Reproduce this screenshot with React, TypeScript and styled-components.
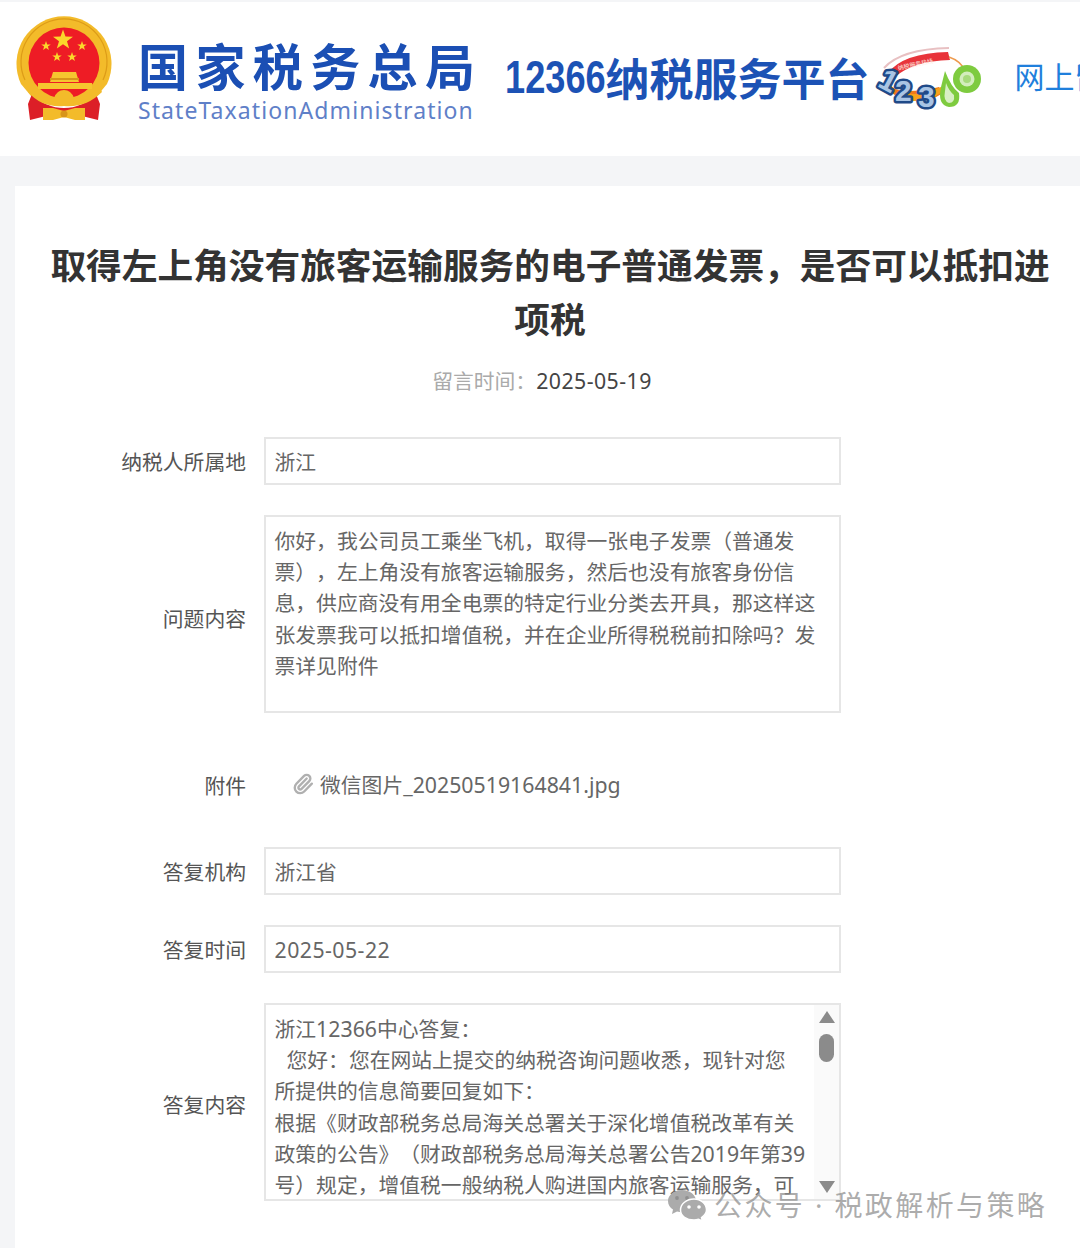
import React from "react";
import styled, { createGlobalStyle } from "styled-components";
import { Paperclip } from "lucide-react";

const Global = createGlobalStyle`
  html, body { margin: 0; padding: 0; background: #f4f5f7; }
  body { font-family: "Noto Sans CJK SC", "Noto Sans", sans-serif; text-spacing-trim: space-all; }
`;

const Page = styled.div`
  position: relative;
  width: 1080px;
  height: 1248px;
  overflow: hidden;
  background: #f4f5f7;
  padding-top: 2px;
  box-sizing: border-box;
`;

const Header = styled.header`
  display: flex;
  align-items: center;
  height: 154px;
  padding-left: 16px;
  background: #fff;
  white-space: nowrap;
`;

const Brand = styled.div`
  display: flex;
  flex-direction: column;
  margin-left: 26px;
  margin-top: 3px;
  flex: none;
`;

const BrandName = styled.div`
  font-size: 50px;
  line-height: 56px;
  font-weight: 700;
  letter-spacing: 7.4px;
  color: #1b4fb4;
`;

const BrandSub = styled.div`
  font-family: "Noto Sans", sans-serif;
  margin-top: 3px;
  font-size: 23px;
  line-height: 30px;
  letter-spacing: 1.09px;
  color: #5f80c8;
`;

const Platform = styled.div`
  display: flex;
  align-items: center;
  margin: -4px 0 0 23px;
  font-size: 44px;
  line-height: 50px;
  font-weight: 700;
  color: #1c52b5;
  flex: none;
`;

const PlatformNumber = styled.span`
  display: inline-block;
  width: 100px;
  font-family: "Liberation Sans", sans-serif;
  font-size: 47px;
  transform: scaleX(0.77);
  transform-origin: left center;
`;

const ServiceLogoSvg = styled.svg`
  flex: none;
  margin: 2px 0 0 4px;
`;

const EmblemSvg = styled.svg`
  flex: none;
  margin-bottom: 22px;
`;

const NavLink = styled.a`
  margin: -8px 0 0 31px;
  font-size: 30px;
  color: #1f7fdc;
  flex: none;
`;

const Card = styled.main`
  margin: 30px 0 0 15px;
  height: 1100px;
  background: #fff;
  padding-top: 51px;
  box-sizing: border-box;
`;

const Title = styled.h1`
  width: 1020px;
  margin: 0 0 0 25px;
  font-size: 35.7px;
  line-height: 54px;
  font-weight: 700;
  color: #333;
  text-align: center;
`;

const DateLine = styled.div`
  margin: 19px 0 40px;
  padding-left: 34px;
  width: 1020px;
  box-sizing: border-box;
  text-align: center;
  font-size: 20.8px;
  line-height: 32px;
  color: #aaa;
`;

const DateValue = styled.span`
  color: #444;
`;

const Form = styled.div`
  display: flex;
  flex-direction: column;
  gap: 30px;
`;

const Row = styled.div<{ $height?: number }>`
  display: grid;
  grid-template-columns: 231px 577px;
  column-gap: 18px;
  align-items: center;
  min-height: ${(p) => p.$height ?? 48}px;
`;

const Label = styled.label<{ $shift?: number }>`
  padding-top: ${(p) => (p.$shift ?? 0) * 2}px;
  font-size: 20.8px;
  line-height: 31px;
  color: #555;
  text-align: right;
`;

const Field = styled.div`
  height: 48px;
  box-sizing: border-box;
  border: 2px solid #e6e6e6;
  padding: 0 8.5px;
  font-size: 20.8px;
  line-height: 44px;
  color: #666;
`;

const AreaBox = styled.div`
  display: flex;
  height: 198px;
  box-sizing: border-box;
  border: 2px solid #e6e6e6;
  overflow: hidden;
`;

const AreaText = styled.div`
  flex: 1;
  padding: 8px 0 0 8.5px;
  font-size: 20.8px;
  line-height: 31.2px;
  color: #666;
  white-space: nowrap;
`;

const AreaLine = styled.div<{ $indent?: boolean }>`
  padding-left: ${(p) => (p.$indent ? 12 : 0)}px;
`;

const Scrollbar = styled.div`
  flex: none;
  width: 25px;
  display: flex;
  flex-direction: column;
  align-items: center;
  padding: 6px 0;
  box-sizing: border-box;
  background: #fafafa;
`;

const ScrollThumb = styled.div`
  width: 15px;
  height: 28px;
  margin-top: 11px;
  border-radius: 8px;
  background: #8b8b8b;
`;

const ScrollSpacer = styled.div`
  flex: 1;
`;

const Attachment = styled.div`
  display: flex;
  align-items: center;
  gap: 6px;
  padding: 8px 0 0 28px;
  font-size: 20.8px;
  line-height: 31px;
  color: #666;
`;

const ClipIcon = styled(Paperclip)`
  color: #b0b0b0;
`;

const Mono = styled.span<{ $tracking?: number }>`
  font-family: "Noto Sans", sans-serif;
  font-size: 21.3px;
  letter-spacing: ${(p) => p.$tracking ?? 0}px;
`;

const Watermark = styled.div`
  position: absolute;
  left: 667px;
  top: 1186px;
  display: flex;
  align-items: center;
  gap: 7px;
  font-family: "Noto Sans", "Noto Sans CJK SC", sans-serif;
  font-size: 28px;
  line-height: 38px;
  letter-spacing: 2.4px;
  color: rgba(140, 140, 140, 0.72);
  white-space: nowrap;
`;

const star = (cx: number, cy: number, r: number) =>
  Array.from({ length: 10 }, (_, i) => {
    const a = -Math.PI / 2 + (i * Math.PI) / 5;
    const rad = i % 2 ? r * 0.4 : r;
    return `${(cx + rad * Math.cos(a)).toFixed(2)},${(cy + rad * Math.sin(a)).toFixed(2)}`;
  }).join(" ");

const Emblem = () => (
  <EmblemSvg width="96" height="104" viewBox="0 0 96 104">
    <path d="M5 68 A47.5 47.5 0 1 1 91 68 L76 86 H20z" fill="#f3bb2a" />
    <path d="M9 64 A43 43 0 1 1 87 64" fill="none" stroke="#dd9c18" strokeWidth="1.2" />
    <circle cx="48" cy="47" r="35.5" fill="#ee1c25" />
    <polygon points={star(47, 24, 10.5)} fill="#fbd72b" />
    <polygon points={star(30, 30, 5)} fill="#fbd72b" />
    <polygon points={star(66, 30, 5)} fill="#fbd72b" />
    <polygon points={star(41, 41, 5)} fill="#fbd72b" />
    <polygon points={star(56, 41, 5)} fill="#fbd72b" />
    <path d="M37 56 H60 L63 66 H34z" fill="#f6c52f" />
    <path d="M22 67 H76 V73 H22z" fill="#f6c52f" />
    <path d="M34 62 H63 V64 H34z" fill="#d8951a" />
    <path d="M12 88 L16 78 Q30 92 48 92 Q66 92 80 78 L84 88 L82 104 L62 99 H34 L14 104z" fill="#dc1f27" />
    <path d="M14 72 Q28 84 38 82 Q41 74 48 74 Q55 74 58 82 Q68 84 84 72 L86 76 Q70 92 48 90 Q26 92 12 76z" fill="#f3bb2a" />
    <path d="M27 92 H37 L48 95 L59 92 H69 V104 H59 L48 101 L37 104 H27z" fill="#f3bb2a" />
    <circle cx="48" cy="98" r="3.5" fill="#d8951a" />
  </EmblemSvg>
);

const ServiceLogo = () => (
  <ServiceLogoSvg width="110" height="66" viewBox="0 0 110 66">
    <path d="M11 21 Q28 2 76 1" fill="none" stroke="#e8c0c2" strokeWidth="2" />
    <path d="M15 26 Q30 6 75 5 L77 13 Q40 14 22 30z" fill="#e8343a" />
    <text x="24" y="20" fontSize="6" fill="#ffe9e0" transform="rotate(-12 40 16)">纳税服务热线</text>
    <path d="M76 10 Q88 14 92 24" fill="none" stroke="#ee9a4e" strokeWidth="1.5" />
    <path d="M13 34 Q20 44 34 44 Q52 44 66 40 L70 46 Q52 58 34 52 Q16 50 13 34z" fill="#ef7a1a" />
    <path d="M24 46 Q48 50 68 40 L68 46 Q48 58 30 52z" fill="#f7a21b" />
    <g
      fontFamily="'Liberation Sans', sans-serif"
      fontWeight="700"
      fill="#a9c4e4"
      stroke="#1f4a88"
      strokeWidth="5"
      paintOrder="stroke"
      strokeLinejoin="round"
    >
      <text x="7" y="43" fontSize="30" transform="rotate(28 14 34)">1</text>
      <text x="22" y="54" fontSize="30">2</text>
      <text x="45" y="60" fontSize="30">3</text>
    </g>
    <path d="M72 24 Q78 40 86 46 Q88 60 76 60 Q64 58 68 40z" fill="#7ecb3f" />
    <path d="M73 36 Q76 44 81 48 Q82 56 76 56 Q70 54 72 44z" fill="#d8efc4" />
    <circle cx="94" cy="32" r="14" fill="#7ecb3f" />
    <circle cx="94" cy="32" r="7.5" fill="#d3edbc" />
    <circle cx="94" cy="32" r="4" fill="#a7da7c" />
  </ServiceLogoSvg>
);

const WeChatMark = () => (
  <svg width="40" height="32" viewBox="0 0 40 32" style={{ flex: "none" }}>
    <path
      d="M15 1 C7 1 1 6 1 12 C1 16 3 18.500 6 20.500 L5 25 L10 22.500 C12 23 13.500 23.300 15 23.300 C23 23.300 29 18 29 12 C29 6 23 1 15 1z"
      fill="#ababab"
    />
    <circle cx="10" cy="9" r="1.9" fill="#8f8f8f" />
    <circle cx="20" cy="9" r="1.900" fill="#8f8f8f" />
    <path
      d="M27 10 C19.500 10 13.500 15 13.500 21 C13.500 27 19.500 31 27 31 C28.500 31 30 30.800 31.500 30.300 L35.500 32 L34.500 28.500 C37.500 26.500 39.500 24 39.500 21 C39.500 15 34 10 27 10z"
      fill="#ababab"
      stroke="#fff"
      strokeWidth="1.5"
    />
    <circle cx="22" cy="18" r="1.800" fill="#fff" />
    <circle cx="32" cy="18" r="1.800" fill="#fff" />
  </svg>
);

const splitMixed = (text: string, tracking?: number) =>
  text.split(/([0-9A-Za-z_.\-]+)/).map((part, i) =>
    /^[0-9A-Za-z_.\-]+$/.test(part) ? (
      <Mono key={i} $tracking={tracking}>
        {part}
      </Mono>
    ) : (
      part
    )
  );

const question = [
  "你好，我公司员工乘坐飞机，取得一张电子发票（普通发",
  "票），左上角没有旅客运输服务，然后也没有旅客身份信",
  "息，供应商没有用全电票的特定行业分类去开具，那这样这",
  "张发票我可以抵扣增值税，并在企业所得税税前扣除吗？发",
  "票详见附件",
];

const answer = [
  { t: "浙江12366中心答复：" },
  { t: "您好：您在网站上提交的纳税咨询问题收悉，现针对您", indent: true },
  { t: "所提供的信息简要回复如下：" },
  { t: "根据《财政部税务总局海关总署关于深化增值税改革有关" },
  { t: "政策的公告》（财政部税务总局海关总署公告2019年第39" },
  { t: "号）规定，增值税一般纳税人购进国内旅客运输服务，可" },
];

export default function App() {
  return (
    <Page>
      <Global />
      <Header>
        <Emblem />
        <Brand>
          <BrandName>国家税务总局</BrandName>
          <BrandSub>StateTaxationAdministration</BrandSub>
        </Brand>
        <Platform>
          <PlatformNumber>12366</PlatformNumber>
          纳税服务平台
        </Platform>
        <ServiceLogo />
        <NavLink>网上留言</NavLink>
      </Header>
      <Card>
        <Title>取得左上角没有旅客运输服务的电子普通发票，是否可以抵扣进项税</Title>
        <DateLine>
          留言时间：<DateValue>{splitMixed("2025-05-19", 0.45)}</DateValue>
        </DateLine>
        <Form>
          <Row>
            <Label>纳税人所属地</Label>
            <Field>浙江</Field>
          </Row>
          <Row>
            <Label $shift={4}>问题内容</Label>
            <AreaBox>
              <AreaText>
                {question.map((l) => (
                  <AreaLine key={l}>{l}</AreaLine>
                ))}
              </AreaText>
            </AreaBox>
          </Row>
          <Row $height={74}>
            <Label $shift={5}>附件</Label>
            <Attachment>
              <ClipIcon size={22} strokeWidth={2.6} />
              <span>{splitMixed("微信图片_20250519164841.jpg")}</span>
            </Attachment>
          </Row>
          <Row>
            <Label>答复机构</Label>
            <Field>浙江省</Field>
          </Row>
          <Row>
            <Label>答复时间</Label>
            <Field>{splitMixed("2025-05-22", 0.45)}</Field>
          </Row>
          <Row>
            <Label $shift={2}>答复内容</Label>
            <AreaBox>
              <AreaText>
                {answer.map((l) => (
                  <AreaLine key={l.t} $indent={l.indent}>
                    {splitMixed(l.t)}
                  </AreaLine>
                ))}
              </AreaText>
              <Scrollbar>
                <svg width="16" height="12" viewBox="0 0 16 12">
                  <path d="M8 0 L16 12 H0z" fill="#8b8b8b" />
                </svg>
                <ScrollThumb />
                <ScrollSpacer />
                <svg width="16" height="12" viewBox="0 0 16 12">
                  <path d="M0 0 H16 L8 12z" fill="#8b8b8b" />
                </svg>
              </Scrollbar>
            </AreaBox>
          </Row>
        </Form>
      </Card>
      <Watermark>
        <WeChatMark />
        <span>公众号 · 税政解析与策略</span>
      </Watermark>
    </Page>
  );
}
